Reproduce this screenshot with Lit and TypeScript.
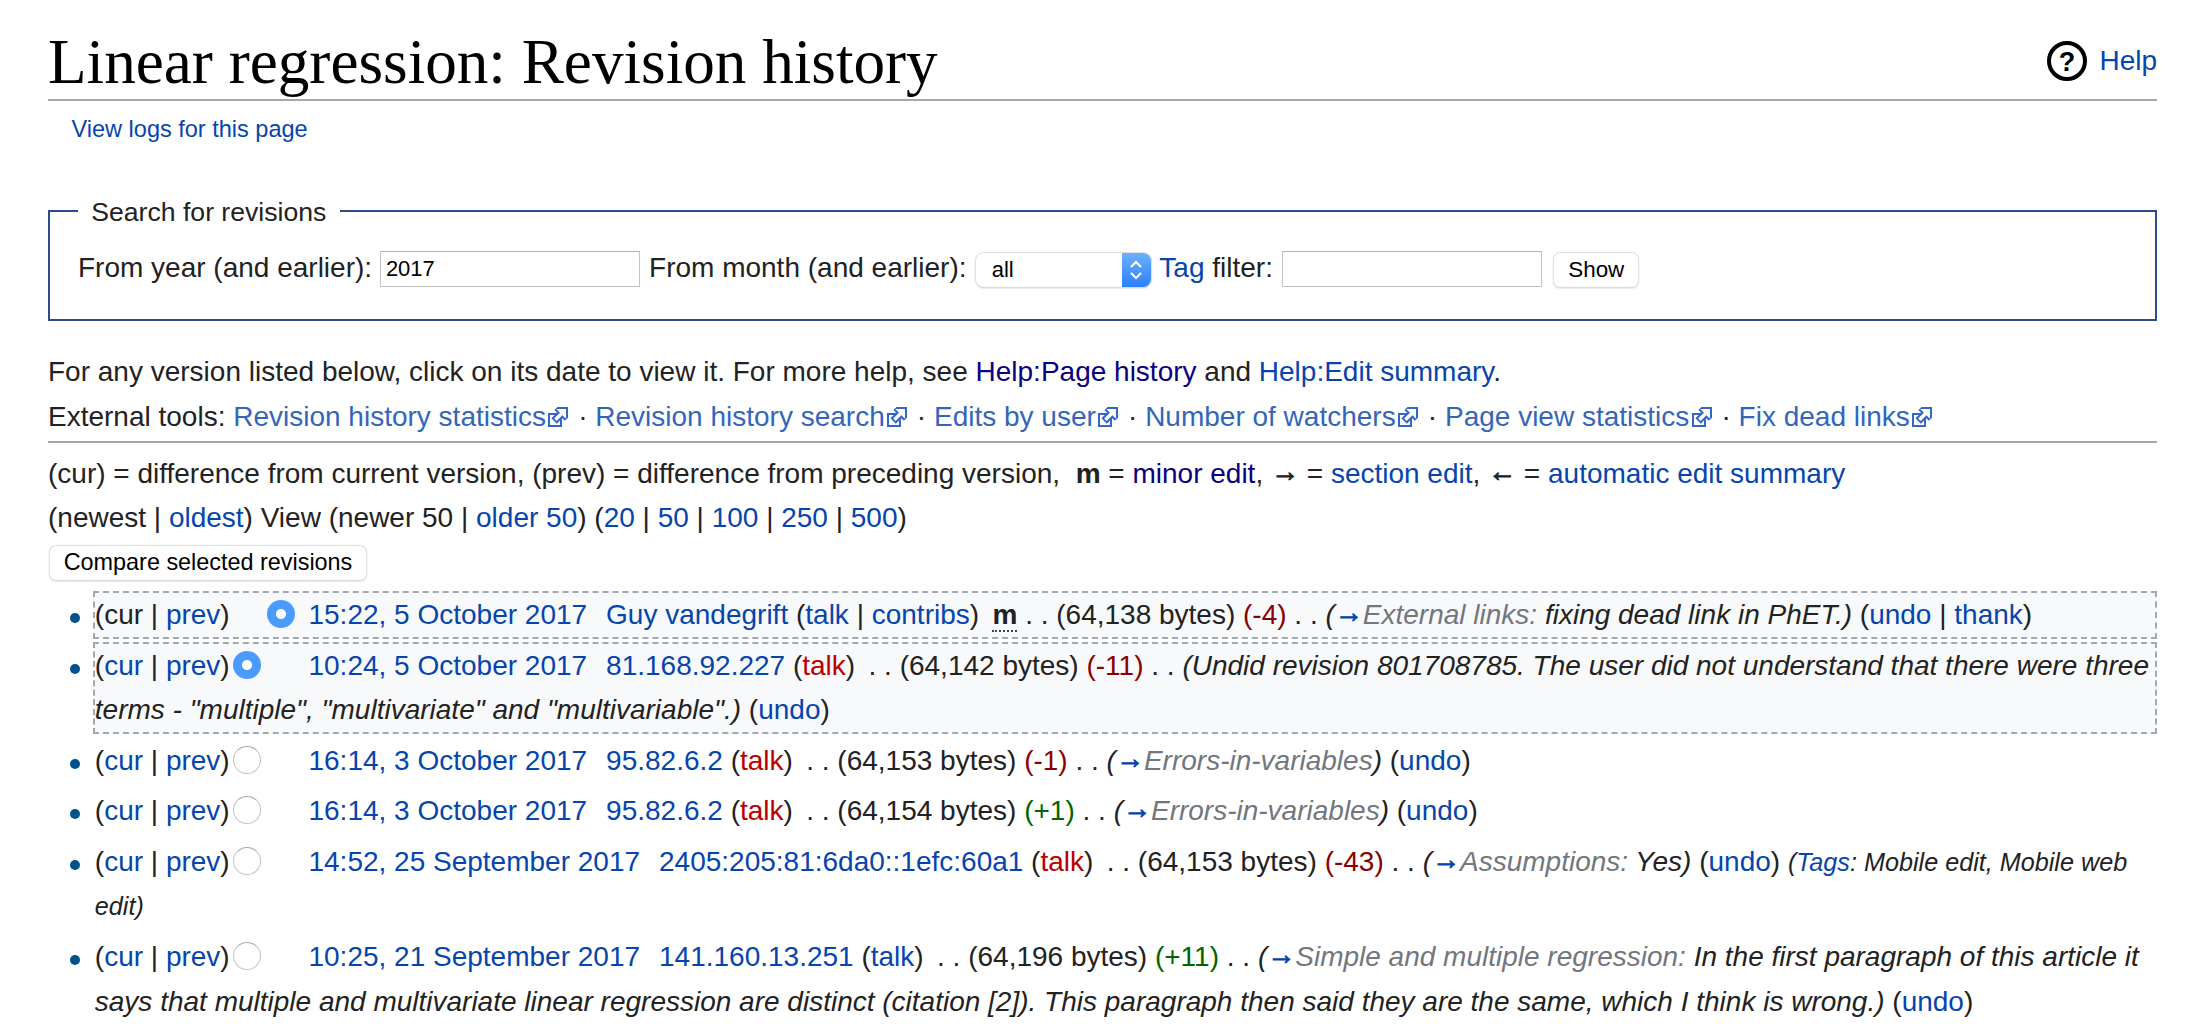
import { LitElement, html, css } from "lit";
import { customElement } from "lit/decorators.js";

const ext = html`<svg class="ext" viewBox="0 0 12 12"><path fill="#fff" stroke="#36c" d="M1.5 4.518h5.982V10.5H1.5z"/><path fill="#36c" d="M5.765 1H11v5.39L9.427 7.937l-1.31-1.31L5.393 9.35l-2.69-2.688 2.81-2.808L4.2 2.544z"/><path fill="#fff" d="M9.995 2.004l.022 4.885L8.2 5.07 5.32 7.95 4.09 6.723l2.882-2.88-1.85-1.852z"/></svg>`;

const links = (first: boolean, sel: 0 | 1 | 2) => html`<span class="hist">(${first ? "cur" : html`<a>cur</a>`} | <a>prev</a>)</span><span class="radios"><input class="radio ${first ? "hide" : ""}" type="radio" name="a" ?checked=${sel === 1} /><input class="radio ${first ? "" : "hide"}" type="radio" name="b" ?checked=${sel === 2 || (first && sel === 1)} /></span> `;

@customElement("app-root")
export class AppRoot extends LitElement {
  static styles = css`
    :host { display: block; background: #fff; color: #222; font-family: "Liberation Sans", Arial, sans-serif; font-size: 28px; line-height: 44.8px; padding: 0 48px; min-height: 1026px; box-sizing: border-box; }
    a { color: #0645ad; text-decoration: none; }
    a.v { color: #0b0080; }
    a.x { color: #36b; }
    a.new { color: #ba0000; }
    .head { display: flex; align-items: flex-start; justify-content: space-between; border-bottom: 2px solid #a2a9b1; margin: 0 0 14.4px; padding-top: 24.5px; }
    h1 { margin: 0; font: 400 63.2px/74.4px "Liberation Serif", "Times New Roman", serif; color: #000; }
    .help { display: flex; align-items: center; gap: 12px; margin-top: 16.5px; font-size: 28px; line-height: 40px; }
    .help svg { width: 40px; height: 40px; display: block; }
    .sub { font-size: 23.52px; line-height: 28.2px; margin: 0 0 33px 23.5px; color: #54595d; }
    fieldset { border: 2px solid #2a4b8d; margin: 0 0 29px; padding: 0 28px 28.8px; min-width: 0; }
    legend { font-size: 26.6px; line-height: 42.6px; padding: 14.3px 13.3px 12.3px; }
    .text { box-sizing: border-box; height: 36px; width: 260px; padding: 0 5px; border: 1px solid #c4c4c4; border-top-color: #b5b5b5; font: 22px "Liberation Sans", sans-serif; color: #000; background: #fff; border-radius: 0; vertical-align: 1px; outline: none; margin: 0 1.4px 0 0; }
    .tag { margin-left: 1.4px; }
    .select { display: inline-flex; box-sizing: border-box; width: 175px; height: 34px; vertical-align: -0.4px; margin: 0 1.4px; border-radius: 8px; background: #fff; box-shadow: 0 0 1px 1px #ddd, 0 1px 2px #bbb; overflow: hidden; }
    .select select { appearance: none; flex: 1; min-width: 0; border: 0; background: transparent; font: 22px "Liberation Sans", sans-serif; color: #000; padding: 0 0 0 16px; outline: none; }
    .arrows { width: 29px; display: flex; align-items: center; justify-content: center; background: linear-gradient(#6bb2fb, #2a7ffa); }
    .arrows svg { width: 14px; height: 24px; display: block; }
    .btn { box-sizing: border-box; height: 34px; border: 0; background: #fff; border-radius: 6px; box-shadow: 0 0 1px 1px #ddd, 0 1px 2px #bbb; font-family: "Liberation Sans", sans-serif; color: #000; padding: 0; }
    .show { width: 84px; font-size: 22.4px; margin-left: 3px; vertical-align: 0; }
    .cmp { width: 316px; font-size: 23.4px; margin: 5.4px 0 0 2px; display: block; }
    p { margin: 0; }
    p.tight { margin-top: -1px; }
    .ext { width: 24px; height: 24px; vertical-align: -3px; margin-left: 0.4px; }
    hr { height: 2px; border: 0; background: #a2a9b1; margin: 0.7px 0 9.4px; }
    .arrow { display: inline-block; transform: translateY(-2px); -webkit-text-stroke: 1px #222; }
    ul { list-style: none; margin: 10.6px 0 0 44.8px; padding: 0; }
    li { position: relative; border: 2px solid transparent; margin-bottom: 1.6px; }
    li::before { content: ""; position: absolute; left: -25px; top: 20px; width: 10px; height: 10px; border-radius: 50%; background: #00528c; }
    li.sel { background: #f8f9fa; border: 2px dashed #a2a9b1; line-height: 44px; margin-bottom: 3.2px; }
    .radios { margin-left: 3px; white-space: nowrap; }
    .radio { appearance: none; box-sizing: border-box; width: 28px; height: 28px; margin: 0 6px 0 0; vertical-align: -4px; border-radius: 50%; background: #fff; border: 1.5px solid #c4c4c4; border-top-color: #aaa; outline: none; }
    .radio:checked { border: 0; background: radial-gradient(circle, #fff 0, #fff 4.5px, #4a9bfd 5.5px); }
    .hide { visibility: hidden; }
    .user { margin: 0 5.6px 0 11.2px; }
    abbr { font-weight: 700; color: #222; text-decoration: none; border-bottom: 2px dotted #444; line-height: 1; }
    .neg { color: #8b0000; }
    .pos { color: #006400; }
    i { font-style: italic; }
    .auto { color: #72777d; }
    .auto a { display: inline-block; transform: translateY(-2px); color: #0645ad; font-style: normal; -webkit-text-stroke: 1px #0645ad; }
    .tags { font-size: 25.2px; font-style: italic; }
  `;

  row(first: boolean, sel: 0 | 1 | 2, date: string, user: any, rest: any) {
    return html`<li class=${sel ? "sel" : ""}>${links(first, sel)}<a>${date}</a> <span class="user">${user}</span> ${rest}</li>`;
  }

  render() {
    return html`
      <div class="head">
        <h1>Linear regression: Revision history</h1>
        <div class="help">
          <svg viewBox="0 0 40 40"><circle cx="20" cy="20" r="18" fill="none" stroke="#000" stroke-width="4"/><text x="20" y="30" text-anchor="middle" font-family="Liberation Sans" font-weight="700" font-size="27" fill="#000">?</text></svg>
          <a>Help</a>
        </div>
      </div>
      <div class="sub"><a>View logs for this page</a></div>
      <fieldset>
        <legend>Search for revisions</legend>
        From year (and earlier): <input class="text" type="text" value="2017" /> From month (and earlier): <span class="select"><select><option>all</option></select><span class="arrows"><svg viewBox="0 0 14 24" fill="none" stroke="#fff" stroke-width="2.2"><path d="M2 9l5-5 5 5M2 15l5 5 5-5"/></svg></span></span> <a>Tag</a> filter: <input class="text tag" type="text" /> <button class="btn show">Show</button>
      </fieldset>
      <p>For any version listed below, click on its date to view it. For more help, see <a class="v">Help:Page history</a> and <a>Help:Edit summary</a>.</p>
      <p>External tools: <a class="x">Revision history statistics${ext}</a> · <a class="x">Revision history search${ext}</a> · <a class="x">Edits by user${ext}</a> · <a class="x">Number of watchers${ext}</a> · <a class="x">Page view statistics${ext}</a> · <a class="x">Fix dead links${ext}</a></p>
      <hr />
      <p>(cur) = difference from current version, (prev) = difference from preceding version, &nbsp;<b>m</b> = <a class="v">minor edit</a>, <span class="arrow">→</span> = <a>section edit</a>, <span class="arrow">←</span> = <a>automatic edit summary</a></p>
      <p class="tight">(newest | <a>oldest</a>) View (newer 50 | <a>older 50</a>) (<a>20</a> | <a>50</a> | <a>100</a> | <a>250</a> | <a>500</a>)</p>
      <button class="btn cmp">Compare selected revisions</button>
      <ul>
        ${this.row(true, 1, "15:22, 5 October 2017", html`<a>Guy vandegrift</a> (<a>talk</a> | <a>contribs</a>)`, html`<abbr>m</abbr> . . (64,138 bytes) <span class="neg">(-4)</span> . . <i>(<span class="auto"><a>→</a>External links:</span> fixing dead link in PhET.)</i> (<a>undo</a> | <a>thank</a>)`)}
        ${this.row(false, 1, "10:24, 5 October 2017", html`<a>81.168.92.227</a> (<a class="new">talk</a>)`, html`. . (64,142 bytes) <span class="neg">(-11)</span> . . <i>(Undid revision 801708785. The user did not understand that there were three terms - "multiple", "multivariate" and "multivariable".)</i> (<a>undo</a>)`)}
        ${this.row(false, 0, "16:14, 3 October 2017", html`<a>95.82.6.2</a> (<a class="new">talk</a>)`, html`. . (64,153 bytes) <span class="neg">(-1)</span> . . <i>(<span class="auto"><a>→</a>Errors-in-variables</span>)</i> (<a>undo</a>)`)}
        ${this.row(false, 0, "16:14, 3 October 2017", html`<a>95.82.6.2</a> (<a class="new">talk</a>)`, html`. . (64,154 bytes) <span class="pos">(+1)</span> . . <i>(<span class="auto"><a>→</a>Errors-in-variables</span>)</i> (<a>undo</a>)`)}
        ${this.row(false, 0, "14:52, 25 September 2017", html`<a>2405:205:81:6da0::1efc:60a1</a> (<a class="new">talk</a>)`, html`. . (64,153 bytes) <span class="neg">(-43)</span> . . <i>(<span class="auto"><a>→</a>Assumptions:</span> Yes)</i> (<a>undo</a>) <span class="tags">(<a>Tags</a>: Mobile edit, Mobile web edit)</span>`)}
        ${this.row(false, 0, "10:25, 21 September 2017", html`<a>141.160.13.251</a> (<a>talk</a>)`, html`. . (64,196 bytes) <span class="pos">(+11)</span> . . <i>(<span class="auto"><a>→</a>Simple and multiple regression:</span> In the first paragraph of this article it says that multiple and multivariate linear regression are distinct (citation [2]). This paragraph then said they are the same, which I think is wrong.)</i> (<a>undo</a>)`)}
      </ul>
    `;
  }
}
